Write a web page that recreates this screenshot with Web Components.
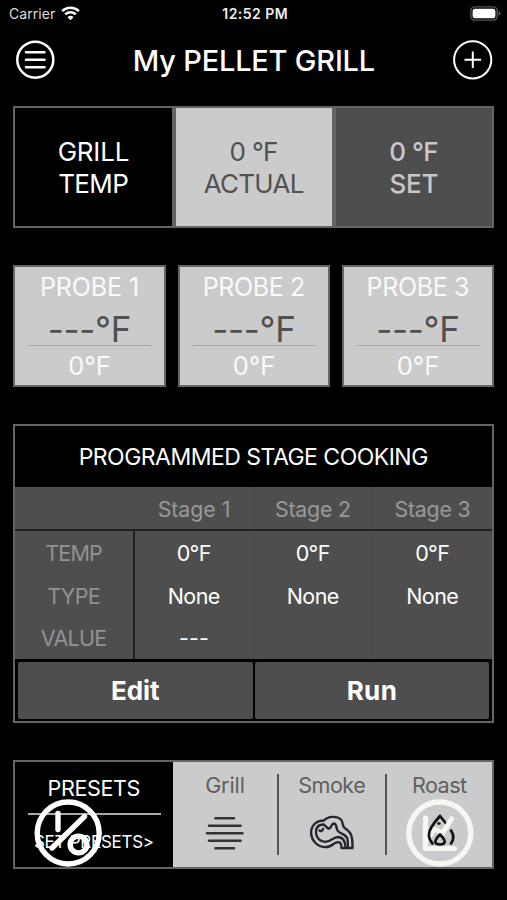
<!DOCTYPE html>
<html lang="en">
<head>
<meta charset="utf-8">
<title>My PELLET GRILL</title>
<style>
html,body{margin:0;background:#000}
body{width:507px;height:900px;overflow:hidden;font-family:Inter,"Liberation Sans",sans-serif;color:#fff}
</style>
</head>
<body>
<grill-app></grill-app>
<script>
const define=(name,html)=>customElements.define(name,class extends HTMLElement{
  constructor(){super();const t=document.createElement('template');t.innerHTML=html;this.attachShadow({mode:'open'}).append(t.content.cloneNode(true));}
});

// One line of text, tracked so that its visible width equals the "w" attribute.
const pen=document.createElement('canvas').getContext('2d');
customElements.define('fit-text',class extends HTMLElement{
  constructor(){super();this.attachShadow({mode:'open'}).innerHTML='<style>:host{display:block;white-space:pre;width:max-content}span{display:block}</style><span><slot></slot></span>';}
  connectedCallback(){
    const text=this.textContent,w=+this.getAttribute('w'),s=this.getAttribute('s'),wt=this.getAttribute('wt')||400,n=text.length;
    this.style.fontSize=s+'px';this.style.fontWeight=wt;
    pen.font=`${wt} ${s}px Inter, "Liberation Sans", sans-serif`;
    const m=pen.measureText(text),ink=m.actualBoundingBoxLeft+m.actualBoundingBoxRight;
    const ls=(w-ink)/(n-1);
    this.style.letterSpacing=ls.toFixed(3)+'px';
    this.shadowRoot.querySelector('span').style.marginRight=(-ls).toFixed(3)+'px';
  }
});

define('status-bar',`<style>
:host{display:grid;grid-template-columns:1fr auto 1fr;height:28px;line-height:28px;align-items:center;padding:0 6px 0 9px;box-sizing:border-box}
.l{display:flex;align-items:center;gap:6px;color:#dedede}.c{color:#eee}.r{justify-self:end;display:flex}svg{display:block;margin-top:-2px}
</style>
<div class="l"><fit-text s="14" w="46">Carrier</fit-text>
<svg width="19" height="15" viewBox="0 0 19 15" fill="none" stroke="#fff" stroke-width="2.4"><path d="M1.1 5.2a12 12 0 0 1 16.8 0M4.2 8.4a7.6 7.6 0 0 1 10.6 0"/><path d="M9.5 14.2L6.5 11.2a4.3 4.3 0 0 1 6 0z" fill="#fff" stroke="none"/></svg></div>
<div class="c"><fit-text s="14" wt="600" w="64.5">12:52 PM</fit-text></div>
<div class="r"><svg width="32" height="15" viewBox="0 0 32 15"><rect x="1.8" y=".9" width="26.4" height="13.2" rx="4" fill="none" stroke="#555" stroke-width="1.4"/><rect x="3.6" y="2.8" width="22.8" height="9.4" rx="2.2" fill="#fff"/><path d="M29.6 5.2q2 .8 2 2.3t-2 2.3z" fill="#555"/></svg></div>`);

define('title-bar',`<style>
:host{display:flex;justify-content:space-between;align-items:center;height:64px;padding:0 14px 0 15px;line-height:64px;box-sizing:border-box}
svg{display:block}fit-text{padding-top:1px}
</style>
<svg width="40" height="40" viewBox="0 0 40 40" fill="none" stroke="#fff" stroke-width="2.5" stroke-linecap="round"><circle cx="20.3" cy="19.7" r="18" /><path d="M11 12.2h18.5M11 19.7h18.5M11 27.2h18.5"/></svg>
<fit-text s="29" wt="500" w="240">My PELLET GRILL</fit-text>
<svg width="40" height="40" viewBox="0 0 40 40" fill="none" stroke="#fff" stroke-width="2"><circle cx="19.7" cy="19.8" r="18.6"/><path d="M11.5 19.8h16.6M19.8 11.5v16.6"/></svg>`);

define('temp-panel',`<style>
:host{display:grid;grid-template-columns:157px 156px 156px;gap:4px;background:#646464;border:2px solid #646464;box-sizing:border-box;width:481px;height:122px;margin:14px 0 0 13px}
</style><slot></slot>`);
define('temp-cell',`<style>
:host{display:flex;flex-direction:column;align-items:center;justify-content:center;line-height:32px;padding-top:1px}
:host([kind=name]){background:#000}:host([kind=actual]){background:#cbcbcb;color:#515151}:host([kind=set]){background:#4e4e4e;color:#c8c8c8}
</style><slot></slot>`);

define('probe-card',`<style>
:host{display:flex;flex-direction:column;align-items:center;box-sizing:border-box;height:122px;border:2px solid #666;background:#cbcbcb;color:#fafafa}
:host>*{flex:none}
.n{line-height:41px;height:41px}.v{line-height:42px;height:37px;color:#505050}hr{flex:none;width:123px;height:1px;background:#a6a6a6;border:0;margin:0}
.t{flex:none;height:38px;line-height:40px}
</style><div class="n"><slot name="name"></slot></div><div class="v"><slot></slot></div><hr><div class="t"><slot name="target"></slot></div>`);

define('stage-table',`<style>
:host{display:block;box-sizing:border-box;width:481px;height:299px;margin:37px 0 0 13px;border:2px solid #646464;background:#000}
.head{height:61px;line-height:62px;display:flex;justify-content:center}
.grid{display:grid;grid-template-columns:120px 119px 119px 1fr;grid-template-rows:44px 43px 43px 42px;background:#4e4e4e;line-height:44px}
.grid>*{display:flex;justify-content:center;box-sizing:border-box}
.h{color:#999;border-bottom:2px solid #202020}
.k{color:#929292;border-right:2px solid #202020}
.h+.h,.d{border-right:1px solid #494949}.e{border-right:0!important}
.last{line-height:42px}
.btns{display:grid;grid-template-columns:1fr 1fr;gap:2px;padding:3px 3px 0 3px}
.btns>div{background:#4e4e4e;height:57px;line-height:58px;display:flex;justify-content:center;border-radius:2px}
</style>
<div class="head"><fit-text s="23" w="346.5">PROGRAMMED STAGE COOKING</fit-text></div>
<div class="grid">
<div class="h"></div><div class="h"><fit-text s="21.3" w="70">Stage 1</fit-text></div><div class="h"><fit-text s="21.3" w="74">Stage 2</fit-text></div><div class="h e"><fit-text s="21.3" w="74">Stage 3</fit-text></div>
<div class="k"><fit-text s="21.5" w="56">TEMP</fit-text></div><div class="d"><fit-text s="21.5" w="33">0°F</fit-text></div><div class="d"><fit-text s="21.5" w="33">0°F</fit-text></div><div class="d e"><fit-text s="21.5" w="33">0°F</fit-text></div>
<div class="k"><fit-text s="21.5" w="51.5">TYPE</fit-text></div><div class="d"><fit-text s="21.5" w="51">None</fit-text></div><div class="d"><fit-text s="21.5" w="51">None</fit-text></div><div class="d e"><fit-text s="21.5" w="51">None</fit-text></div>
<div class="k last"><fit-text s="21.5" w="65.5">VALUE</fit-text></div><div class="d last"><fit-text s="21.5" w="28">---</fit-text></div><div class="d"></div><div class="d e"></div>
</div>
<div class="btns"><div><fit-text s="26" wt="700" w="48">Edit</fit-text></div><div><fit-text s="26" wt="700" w="48">Run</fit-text></div></div>`);

define('preset-item',`<style>
:host{display:flex;flex-direction:column;align-items:center;color:#606060;line-height:30px}
.i{height:40px;margin-top:14.5px;display:flex}
</style><slot></slot><div class="i"><slot name="icon"></slot></div>`);

define('presets-panel',`<style>
:host{display:grid;position:relative;grid-template-columns:158px 1fr;box-sizing:border-box;width:481px;height:109px;margin:37px 0 0 13px;border:2px solid #646464;background:#cbcbcb}
.p{background:#000;display:flex;flex-direction:column;align-items:center;line-height:30px;padding-top:11px}
hr{width:133px;height:2px;background:#aaa;border:0;margin:10px 0 11.500px}
.items{display:grid;grid-template-columns:104px 2px 106px 2px 1fr;padding-top:8px}
.bar{width:2px;height:81px;background:#555;margin-top:4px}
svg{display:block}
.badge{position:absolute;top:37px}.b1{left:19px}.b2{left:391px}
</style>
<div class="p"><fit-text s="21.6" w="91">PRESETS</fit-text><hr><fit-text s="17" w="119">SET PRESETS&gt;</fit-text></div>
<div class="items">
<preset-item><fit-text s="21.6" w="37.5">Grill</fit-text><svg slot="icon" width="40" height="36" viewBox="0 0 40 36" stroke="#333" stroke-width="2.6" stroke-linecap="round"><path d="M10.500 3.300h18.500M4 10.800h31.500M2 18.200h35.500M4 25.700h31.500M10.500 33.200h18.500"/></svg></preset-item>
<div class="bar"></div>
<preset-item><fit-text s="21.6" w="66">Smoke</fit-text><svg slot="icon" width="46" height="36" viewBox="0 0 46 36" fill="none" stroke="#252830" stroke-width="2.4" stroke-linejoin="round" stroke-linecap="round"><path d="M15 5.500C19 1 28 .7 32 4.500c2.200 2 .8 7 4.200 9C42.500 17 43.500 22.500 43.500 29.500V33H32.500C32.500 27 29.500 25.500 24.500 29 19.500 33.500 11.500 33 6.500 28 .8 22 .8 14 5.500 9 8.200 6.300 11.500 5.500 15 5.500Z"/><path d="M14.500 9.500C18 11.500 18 14 20.500 13.500 22.500 12.500 22 9 25 8.500c3 .5 2 4.500 3.500 7 2 3.500 8.500 3 10 8.500l.5 8.500M14.500 9.500C9 9.500 6.500 13 7 18c.5 5.500 4.500 8.700 9 8.900 6 .2 8-4.900 13-4.900 4.500.2 7.200 4 7.500 10.500M10.500 15.500c1.500 1 3 .5 3.500-1.500"/></svg></preset-item>
<div class="bar"></div>
<preset-item><fit-text s="21.6" w="54">Roast</fit-text></preset-item>
</div>
<svg class="badge b1" width="68" height="68" viewBox="0 0 68 68" fill="none" stroke="#fff" stroke-width="5.400" stroke-linecap="round"><circle cx="34.200" cy="34" r="31"/><path d="M24 14.500v16M50.500 17.500L18 49"/><circle cx="44.500" cy="45.500" r="8.400"/></svg>
<svg class="badge b2" width="68" height="68" viewBox="0 0 68 68" fill="none" stroke-linecap="round" stroke-linejoin="round"><circle cx="33.800" cy="34" r="31" stroke="#f6f6f3" stroke-width="5.400"/>
<path d="M19.500 19v30.500h29" stroke="#f6f6f3" stroke-width="5.200"/><path d="M22 40L28 30l9 4" stroke="#f6f6f3" stroke-width="5"/>
<path d="M26.500 44.500C22 39.500 21.500 34.500 25.500 28c3-5 4.500-6.500 8.500-11l6 7.500M45 31.500c3 4.500 3 9 0 13M34 35.500C30.500 39 29 41 29.300 43q.5 2.500 4.700 2.500t4.700-2.500c.3-2-1.200-4-4.700-7.500ZM32.500 24.500h.8" stroke="#111" stroke-width="2.700"/>
<path d="M38.500 31L45.500 20" stroke="#f6f6f3" stroke-width="5"/></svg>`);

define('grill-app',`<style>
:host{display:block;width:507px;height:900px;background:#000}
.probes{display:grid;grid-template-columns:153px 152px 152px;gap:12px;margin:37px 0 0 13px}
</style>
<status-bar></status-bar><title-bar></title-bar>
<temp-panel>
<temp-cell kind="name"><fit-text s="26" w="70">GRILL</fit-text><fit-text s="26" w="69">TEMP</fit-text></temp-cell>
<temp-cell kind="actual"><fit-text s="26" w="46.500">0 °F</fit-text><fit-text s="26" w="100">ACTUAL</fit-text></temp-cell>
<temp-cell kind="set"><fit-text s="26" wt="500" w="47">0 °F</fit-text><fit-text s="26" wt="500" w="47">SET</fit-text></temp-cell>
</temp-panel>
<div class="probes">
<probe-card><fit-text slot="name" s="25" w="95">PROBE 1</fit-text><fit-text s="35" w="80">---°F</fit-text><fit-text slot="target" s="25.500" w="40.500">0°F</fit-text></probe-card>
<probe-card><fit-text slot="name" s="25" w="99.500">PROBE 2</fit-text><fit-text s="35" w="80">---°F</fit-text><fit-text slot="target" s="25.500" w="40.500">0°F</fit-text></probe-card>
<probe-card><fit-text slot="name" s="25" w="99.500">PROBE 3</fit-text><fit-text s="35" w="80">---°F</fit-text><fit-text slot="target" s="25.500" w="40.500">0°F</fit-text></probe-card>
</div>
<stage-table></stage-table>
<presets-panel></presets-panel>`);
</script>
</body>
</html>
